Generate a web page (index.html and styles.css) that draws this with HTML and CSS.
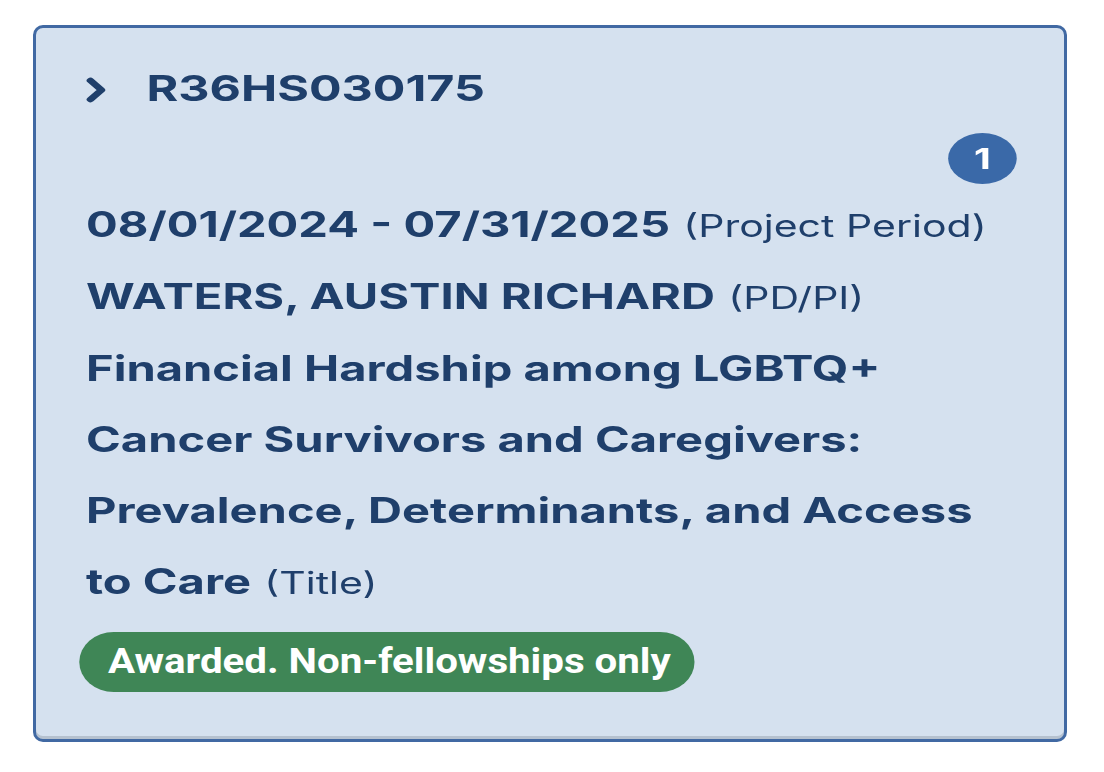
FILE: index.html
```html
<!DOCTYPE html>
<html>
<head>
    <meta charset="UTF-8">
    <title>Grant</title>
    <link rel="stylesheet" href="styles.css">
</head>
<body>
    <div class="card">
        <div class="inner">
            <div class="head">
                <svg class="chev" width="15" height="28" viewBox="0 0 15 28">
                    <path d="M3.3 4.5 L11.5 14 L3.3 23.5" fill="none" stroke="#1f3f6b" stroke-width="5.6" stroke-linecap="round" stroke-linejoin="round"/>
                </svg>
                <span class="num">R36HS030175</span>
            </div>
            <div class="count-row">
                <span class="count">1</span>
            </div>
            <div class="lines">
                <div><b>08/01/2024 - 07/31/2025</b> <span class="note">(Project Period)</span></div>
                <div><b>WATERS, AUSTIN RICHARD</b> <span class="note">(PD/PI)</span></div>
                <div><b>Financial Hardship among LGBTQ+ Cancer Survivors and Caregivers: Prevalence, Determinants, and Access to Care</b> <span class="note">(Title)</span></div>
            </div>
            <div class="status">Awarded. Non-fellowships only</div>
        </div>
    </div>
</body>
</html>
```

FILE: styles.css
```css
* {
    margin: 0;
    padding: 0;
    box-sizing: border-box;
}
body {
    background: #fff;
    font-family: Inter, "Liberation Sans", sans-serif;
    color: #1f3f6b;
}
.card {
    margin: 25px 0 0 33px;
    width: 1034px;
    height: 717px;
    background: #d5e1ef;
    border: 3px solid #4169a3;
    border-radius: 10px;
    box-shadow: inset 0 -3px 0 #b5c1cf;
    padding: 0 0 0 50px;
}
/* the shot is stretched sideways, so the content is too */
.inner {
    width: 692px;
    transform: scaleX(1.345);
    transform-origin: 0 0;
}
.head {
    display: flex;
    align-items: center;
    height: 46px;
    margin-top: 37px;
}
.chev {
    margin: 4px 30px 0 0;
}
.num {
    font-size: 36px;
    font-weight: 700;
    line-height: 46px;
}
.count-row {
    display: flex;
    justify-content: flex-end;
    margin-top: 22px;
}
.count {
    width: 51px;
    height: 51px;
    border-radius: 50%;
    background: #3a69a8;
    color: #fff;
    font-size: 29px;
    font-weight: 700;
    display: flex;
    align-items: center;
    justify-content: center;
}
.lines {
    width: 690px;
    font-size: 35px;
    line-height: 71px;
    margin-top: 5px;
}
.lines b {
    font-weight: 700;
}
.note {
    font-size: 30.5px;
    font-weight: 400;
}
.status {
    display: inline-block;
    margin: 14px 0 0 -5px;
    height: 60px;
    line-height: 60px;
    padding: 0 21px 0 25px;
    border-radius: 30px;
    background: #3f8656;
    color: #fff;
    font-size: 35px;
    font-weight: 700;
    font-family: Roboto, "Liberation Sans", sans-serif;
    transform: scaleX(0.855);
    transform-origin: 0 0;
}
```
